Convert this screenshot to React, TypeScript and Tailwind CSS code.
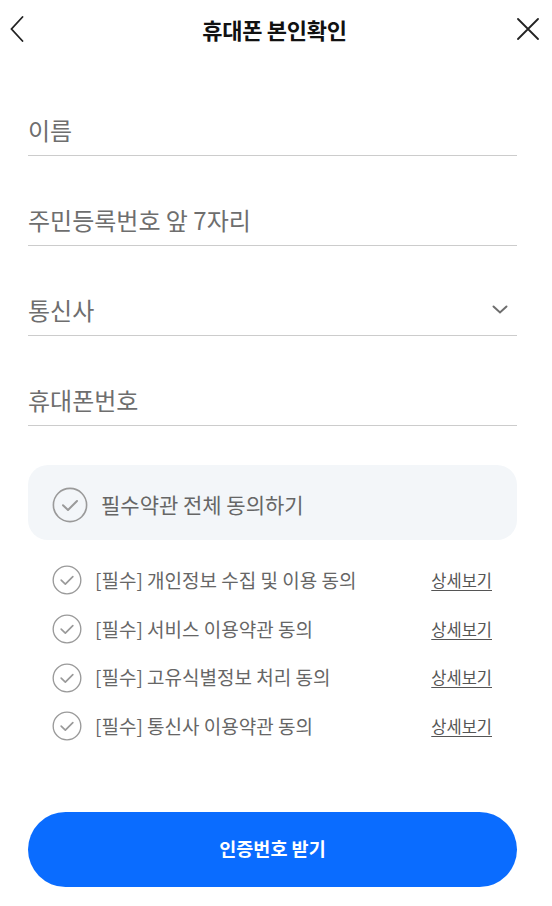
import { useState } from "react";

const terms = [
  "[필수] 개인정보 수집 및 이용 동의",
  "[필수] 서비스 이용약관 동의",
  "[필수] 고유식별정보 처리 동의",
  "[필수] 통신사 이용약관 동의",
];

function CheckCircle({ size }: { size: number }) {
  return (
    <svg width={size} height={size} viewBox="0 0 36 36" fill="none">
      <circle cx="18" cy="18" r="16.6" stroke="#9a9a9a" strokeWidth="1.6" />
      <path d="M11 18.2l5 4.8 9-9" stroke="#9a9a9a" strokeWidth="2" strokeLinecap="round" strokeLinejoin="round" />
    </svg>
  );
}

function Field({ label, select }: { label: string; select?: boolean }) {
  return (
    <div className="h-[54px] flex items-center justify-between border-b border-[#cccccc] pt-[2px]">
      <span className="text-[24px] text-[#6e6e6e]">{label}</span>
      {select && (
        <svg width="16" height="9" viewBox="0 0 16 9" fill="none" className="mr-[9px]">
          <path d="M1.5 1.5l6.5 6 6.5-6" stroke="#6e6e6e" strokeWidth="2" strokeLinecap="round" />
        </svg>
      )}
    </div>
  );
}

export default function App() {
  const [agreed] = useState(false);

  return (
    <div
      className="w-[552px] min-h-[906px] bg-white"
      style={{ fontFamily: '"Noto Sans CJK KR", "Noto Sans", sans-serif' }}
    >
      {/* Header */}
      <div className="h-[58px] flex items-center justify-between px-[10px]">
        <button className="w-[24px] h-[26px] flex items-center">
          <svg width="14" height="26" viewBox="0 0 14 26" fill="none">
            <path d="M12.5 1L1.5 13l11 12" stroke="#222" strokeWidth="1.8" strokeLinecap="round" />
          </svg>
        </button>
        <h1 className="text-[22px] font-bold text-[#111] tracking-[-0.3px]">휴대폰 본인확인</h1>
        <button className="w-[24px] h-[24px] flex items-center justify-end mr-[3px]">
          <svg width="22" height="22" viewBox="0 0 22 22" fill="none">
            <path d="M1 1l20 20M21 1L1 21" stroke="#222" strokeWidth="1.8" strokeLinecap="round" />
          </svg>
        </button>
      </div>

      <div className="px-[28px] pr-[35px]">
        <div className="mt-[44px] flex flex-col gap-[36px]">
          <Field label="이름" />
          <Field label="주민등록번호 앞 7자리" />
          <Field label="통신사" select />
          <Field label="휴대폰번호" />
        </div>

        {/* Agree all */}
        <div className="mt-[39px] h-[75px] rounded-[20px] bg-[#f3f6f9] flex items-center pl-[24px] gap-[13px] pt-[4px]">
          <CheckCircle size={36} />
          <span className="text-[21px] text-[#666]">필수약관 전체 동의하기</span>
        </div>

        <div className="mt-[16px] pl-[24px] pr-[25px]">
          {terms.map((t) => (
            <div key={t} className="h-[48.7px] flex items-center">
              <CheckCircle size={30} />
              <span className="ml-[13px] text-[19px] text-[#666] flex-1">{t}</span>
              <a className="text-[16.5px] text-[#555] underline underline-offset-[3px]">상세보기</a>
            </div>
          ))}
        </div>

        <button
          disabled={agreed}
          className="mt-[61px] w-full h-[75px] rounded-full bg-[#0a6cff] text-white text-[18.5px] font-semibold"
        >
          인증번호 받기
        </button>
      </div>
    </div>
  );
}
